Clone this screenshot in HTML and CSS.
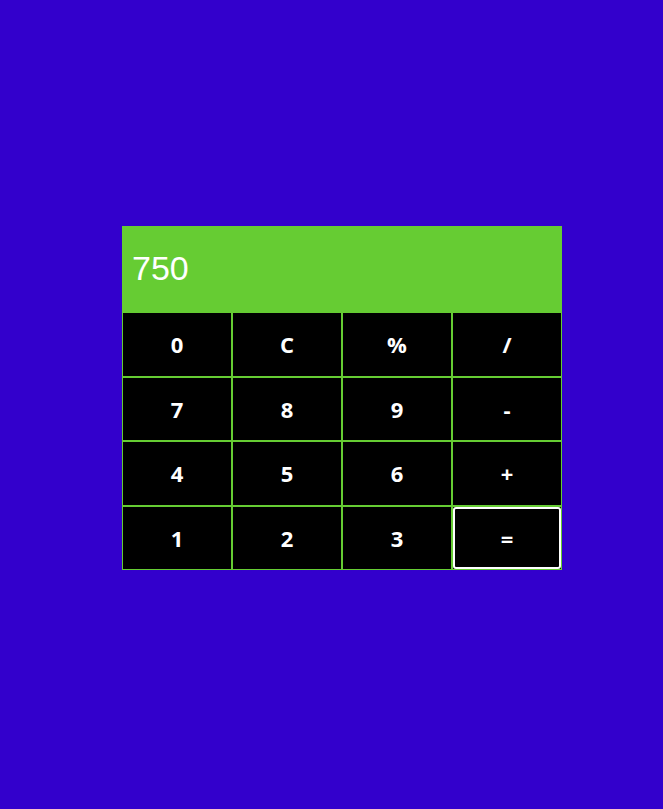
FILE: index.html
```html
<!DOCTYPE html>
<html>
<head>
<meta charset="utf-8">
<link rel="stylesheet" href="styles.css">
</head>
<body>
<div class="calc">
  <div class="display">750</div>
  <div class="keys">
    <button class="key">0</button>
    <button class="key">C</button>
    <button class="key">%</button>
    <button class="key">/</button>
    <button class="key">7</button>
    <button class="key">8</button>
    <button class="key">9</button>
    <button class="key">-</button>
    <button class="key">4</button>
    <button class="key">5</button>
    <button class="key">6</button>
    <button class="key">+</button>
    <button class="key">1</button>
    <button class="key">2</button>
    <button class="key">3</button>
    <button class="key key-focus">=</button>
  </div>
</div>
</body>
</html>
```
FILE: styles.css
```css
html, body {
  margin: 0;
  padding: 0;
  height: 100%;
}
body {
  background: #3300cc;
  padding: 226px 0 0 122px;
  box-sizing: border-box;
}
.calc {
  width: 440px;
}
.display {
  height: 86px;
  background: #66cc33;
  color: #fff;
  font-family: "Liberation Sans", Arial, sans-serif;
  font-size: 34px;
  line-height: 84px;
  padding-left: 10px;
  box-sizing: border-box;
}
.keys {
  display: grid;
  grid-template-columns: repeat(4, 110px);
  grid-auto-rows: 64.5px;
}
.key {
  position: relative;
  margin: 0;
  background: #000;
  color: #fff;
  border: 1px solid #66cc33;
  font-family: "Open Sans", sans-serif;
  font-weight: 700;
  font-size: 22px;
  padding: 0;
  cursor: pointer;
}
.key-focus::after {
  content: "";
  position: absolute;
  top: 0;
  left: 0;
  right: 0;
  bottom: 0;
  border: 2px solid #fff;
  border-radius: 3px;
}
```
